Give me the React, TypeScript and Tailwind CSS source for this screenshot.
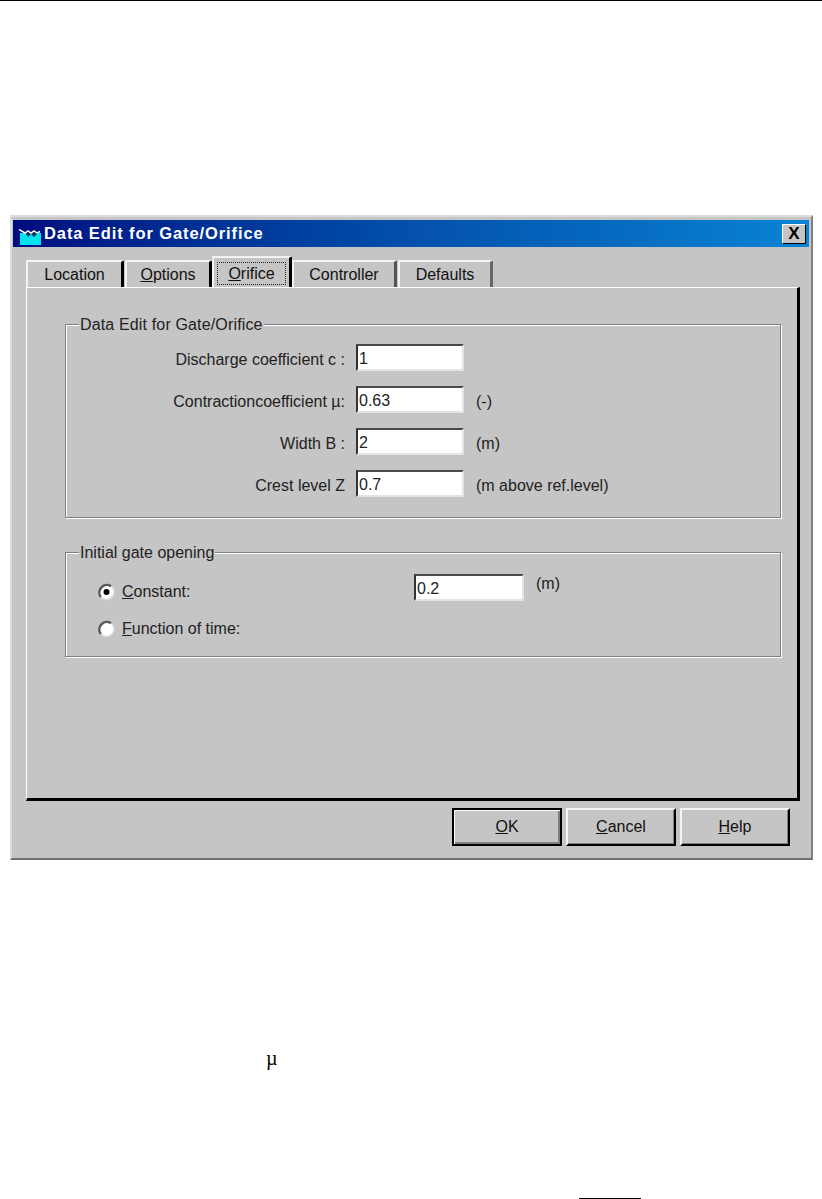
const FIELDS = [
  { label: "Discharge coefficient c :", value: "1", unit: "" },
  { label: "Contractioncoefficient µ:", value: "0.63", unit: "(-)" },
  { label: "Width B :", value: "2", unit: "(m)" },
  { label: "Crest level Z", value: "0.7", unit: "(m above ref.level)" },
];

function TitleIcon() {
  return (
    <svg width="22" height="17" viewBox="0 0 22 17" className="mt-[7px] shrink-0">
      <rect x="1" y="4" width="21" height="12" fill="#00e4f0" />
      <path d="M6 4 L9 8 L12 5 L15 8 L19 4 Z" fill="#063a5a" />
      <path d="M0 0.5 L6 4 L9 2 L12 4 L15 2 L18 4 L21 2.5" fill="none" stroke="#fff" strokeWidth="1.5" />
    </svg>
  );
}

function Radio({ checked, className }: { checked?: boolean; className?: string }) {
  return (
    <svg width="17" height="18" viewBox="0 0 17 18" className={`shrink-0 ${className ?? ""}`}>
      <circle cx="8.5" cy="9" r="7.5" fill="#fff" stroke="#dcdcdc" strokeWidth="1.5" />
      <path d="M2.8 14 A7.5 7.5 0 0 1 13 3.3" fill="none" stroke="#5a5a5a" strokeWidth="2.5" />
      {checked && <circle cx="8.5" cy="9" r="3" fill="#000" />}
    </svg>
  );
}

function Sunken({ value, className }: { value: string; className: string }) {
  return (
    <div
      className={`h-[27px] border-2 border-t-[#4a4a4a] border-l-[#333] border-r-[#e4e4e4] border-b-[#e4e4e4] bg-white pl-px text-[16px] leading-[26px] text-[#222] ${className}`}
    >
      {value}
    </div>
  );
}

function Tab({ label, u, rest, className }: { label: string; u?: string; rest?: string; className: string }) {
  return (
    <div
      className={`flex items-center justify-center rounded-t-[2px] border-t-2 border-l-2 border-r-[3px] border-t-[#f2f2f2] border-l-[#f2f2f2] text-[16px] text-[#111] ${className}`}
    >
      {u ? (
        <span>
          <span className="underline">{u}</span>
          {rest}
        </span>
      ) : (
        label
      )}
    </div>
  );
}

function DialogButton({ u, rest, isDefault }: { u: string; rest: string; isDefault?: boolean }) {
  return (
    <div
      className={`flex h-[38px] w-[110px] items-center justify-center border-2 text-[16px] text-[#111] ${
        isDefault
          ? "border-black shadow-[inset_1px_1px_0_#fff,inset_-2px_-2px_0_#808080]"
          : "border-t-[#f4f4f4] border-l-[#f4f4f4] border-r-black border-b-black shadow-[inset_-1px_-1px_0_#808080]"
      }`}
    >
      <span>
        <span className="underline">{u}</span>
        {rest}
      </span>
    </div>
  );
}

export default function App() {
  return (
    <div className="h-[1199px] w-[822px] overflow-hidden bg-white font-['Liberation_Sans',sans-serif]">
      <div className="h-px bg-black" />

      <div className="ml-[10px] mt-[214px] h-[645px] w-[803px] border-2 border-t-[#dcdcdc] border-l-[#dcdcdc] border-r-[#808080] border-b-[#707070] bg-[#c5c5c5] pl-px pr-[2px] pt-[3px]">
        <div className="flex h-[27px] items-center bg-gradient-to-r from-[#000a80] via-[#0650ac] to-[#0a84d4] pl-[6px] pr-[3px]">
          <TitleIcon />
          <span className="ml-[3px] text-[16.5px] font-bold tracking-[0.9px] text-white">Data Edit for Gate/Orifice</span>
          <div className="ml-auto flex h-[20px] w-[24px] items-center justify-center border border-t-white border-l-white border-r-black border-b-black bg-[#c5c5c5] text-[17px] leading-none font-bold text-black">
            X
          </div>
        </div>

        <div className="ml-[13px] mt-[10px] flex h-[30px] items-end">
          <Tab label="Location" className="h-[27px] w-[98px] border-r-black" />
          <Tab label="" u="O" rest="ptions" className="ml-px h-[27px] w-[87px] border-r-black" />
          <div className="flex h-[31px] w-[80px] items-center justify-center rounded-t-[2px] border-t-2 border-l-2 border-r-[3px] border-t-[#f2f2f2] border-l-[#f2f2f2] border-r-black pt-[2px] text-[16px] text-[#111]">
            <span className="border border-dotted border-[#222] px-[10px] leading-[21px]">
              <span className="underline">O</span>rifice
            </span>
          </div>
          <Tab label="Controller" className="h-[27px] w-[105px] border-r-[#555]" />
          <Tab label="Defaults" className="ml-px h-[27px] w-[95px] border-r-2 border-r-[#666]" />
        </div>

        <div className="ml-[13px] h-[514px] w-[774px] border-t border-l border-r-[3px] border-b-[3px] border-t-white border-l-white border-r-black border-b-black pl-[38px] pr-[16px] pt-[28px]">
          <fieldset className="h-[202px] border border-[#808080] pl-[13px] shadow-[1px_1px_0_#fff,inset_1px_1px_0_#fff]">
            <legend className="bg-[#c5c5c5] px-px text-[16px] leading-[17px] tracking-[0.15px] text-[#222]">Data Edit for Gate/Orifice</legend>
            <div className="mt-[11px] ml-[-14px] grid grid-cols-[291px_108px_1fr] items-center gap-y-[15px]">
              {FIELDS.map((f) => (
                <div key={f.label} className="contents">
                  <div className="pr-[11px] pt-[4px] text-right text-[16px] leading-[23px] text-[#222]">{f.label}</div>
                  <Sunken value={f.value} className="" />
                  <div className="pl-[12px] pt-[4px] text-[16px] leading-[23px] text-[#222]">{f.unit}</div>
                </div>
              ))}
            </div>
          </fieldset>

          <fieldset className="mt-[26px] h-[113px] border border-[#808080] pl-[13px] shadow-[1px_1px_0_#fff,inset_1px_1px_0_#fff]">
            <legend className="bg-[#c5c5c5] px-px text-[16px] leading-[17px] text-[#222]">Initial gate opening</legend>
            <div className="ml-[19px] mt-[13px] flex items-center">
              <Radio checked className="mt-[9px]" />
              <span className="ml-[7px] mt-[9px] w-[292px] text-[16px] leading-[18px] text-[#222]">
                <span className="underline">C</span>onstant:
              </span>
              <Sunken value="0.2" className="w-[110px]" />
              <span className="mb-[8px] ml-[12px] text-[16px] leading-[18px] text-[#222]">(m)</span>
            </div>
            <div className="ml-[19px] mt-[19px] flex items-center">
              <Radio />
              <span className="ml-[7px] text-[16px] leading-[18px] text-[#222]">
                <span className="underline">F</span>unction of time:
              </span>
            </div>
          </fieldset>
        </div>

        <div className="mr-[19px] mt-[7px] flex justify-end gap-[4px]">
          <DialogButton u="O" rest="K" isDefault />
          <DialogButton u="C" rest="ancel" />
          <DialogButton u="H" rest="elp" />
        </div>
      </div>

      <div className="ml-[266px] mt-[188px] font-['Liberation_Serif',serif] text-[20px] leading-[20px] text-black">µ</div>
      <div className="ml-[579px] mt-[130px] h-px w-[62px] bg-black" />
    </div>
  );
}
